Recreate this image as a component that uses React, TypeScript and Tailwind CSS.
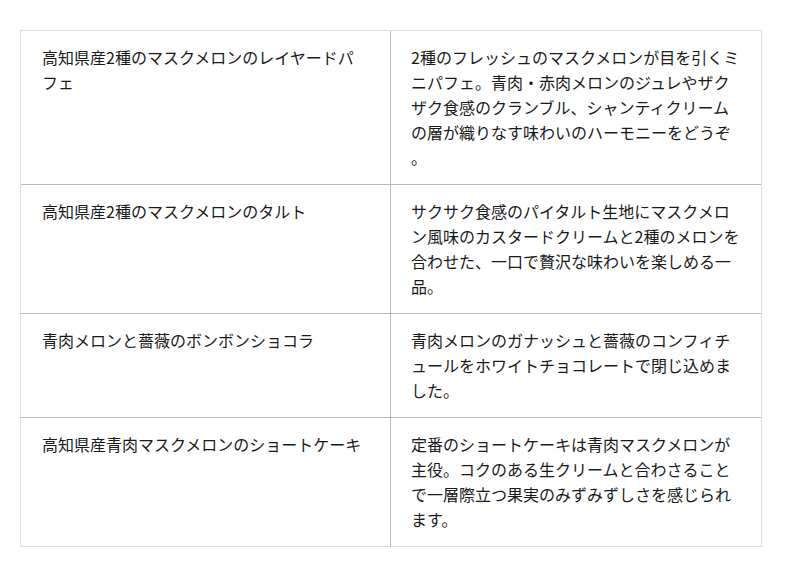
const rows: [string, string][] = [
  [
    '高知県産2種のマスクメロンのレイヤードパフェ',
    '2種のフレッシュのマスクメロンが目を引くミニパフェ。青肉・赤肉メロンのジュレやザクザク食感のクランブル、シャンティクリームの層が織りなす味わいのハーモニーをどうぞ。',
  ],
  [
    '高知県産2種のマスクメロンのタルト',
    'サクサク食感のパイタルト生地にマスクメロン風味のカスタードクリームと2種のメロンを合わせた、一口で贅沢な味わいを楽しめる一品。',
  ],
  [
    '青肉メロンと薔薇のボンボンショコラ',
    '青肉メロンのガナッシュと薔薇のコンフィチュールをホワイトチョコレートで閉じ込めました。',
  ],
  [
    '高知県産青肉マスクメロンのショートケーキ',
    '定番のショートケーキは青肉マスクメロンが主役。コクのある生クリームと合わさることで一層際立つ果実のみずみずしさを感じられます。',
  ],
];

const App: React.FC = () => {
  return (
    <div className="min-h-[577px] bg-white pt-[30px] pl-5 font-['Noto_Sans_CJK_JP','Noto_Sans',sans-serif] text-[16px] leading-[25px] text-[#1a1a1a]">
      <div className="w-[742px] border border-[#dcdcdc]">
        {rows.map(([name, desc], i) => (
          <div
            key={i}
            className={`grid grid-cols-[369px_1fr] ${i > 0 ? 'border-t border-[#b8b8b8]' : ''}`}
          >
            <div className="py-[14px] pl-[21px] pr-[21px] [line-break:anywhere]">{name}</div>
            <div className="border-l border-[#b8b8b8] py-[14px] px-5 [line-break:anywhere]">
              {desc}
            </div>
          </div>
        ))}
      </div>
    </div>
  );
};

export default App;
